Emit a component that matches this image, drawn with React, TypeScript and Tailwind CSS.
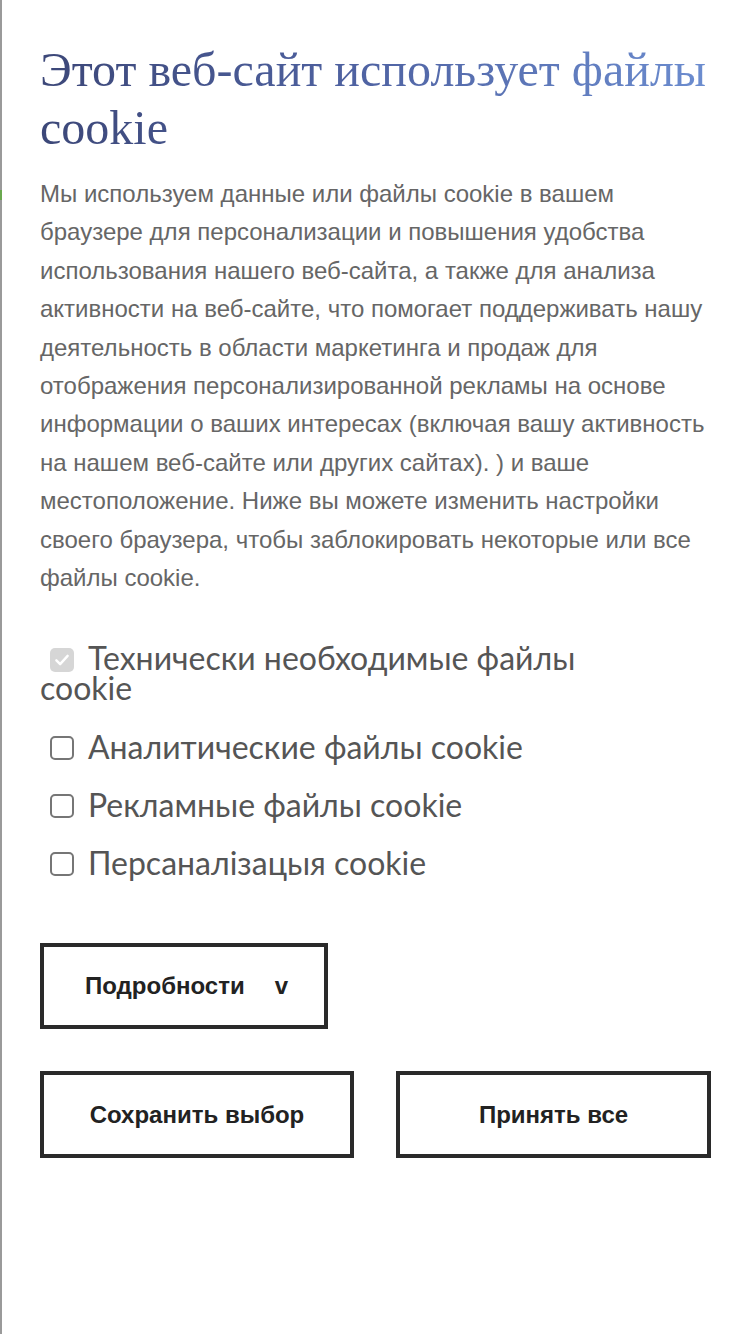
import React, { useState } from 'react';

const Check = () => (
  <svg viewBox="0 0 24 24" className="h-[18px] w-[18px]" fill="none" stroke="white" strokeWidth="3.2" strokeLinecap="round" strokeLinejoin="round">
    <path d="M4.5 12.5l5 5L19.5 6.5" />
  </svg>
);

const Box: React.FC<{ checked: boolean; onClick?: () => void }> = ({ checked, onClick }) => (
  <span
    onClick={onClick}
    className={`mt-[2px] mr-[14px] inline-flex h-[24px] w-[24px] shrink-0 items-center justify-center rounded-[5px] border-2 ${
      checked ? 'bg-[#555] border-[#555]' : 'border-[#767676] bg-white'
    }`}
  >
    {checked && <Check />}
  </span>
);

export default function App() {
  const [analytics, setAnalytics] = useState(false);
  const [ads, setAds] = useState(false);
  const [perso, setPerso] = useState(false);

  const rows = [
    { label: 'Аналитические файлы cookie', value: analytics, set: setAnalytics },
    { label: 'Рекламные файлы cookie', value: ads, set: setAds },
    { label: 'Персаналізацыя cookie', value: perso, set: setPerso },
  ];

  return (
    <div className="relative min-h-[1334px] w-[750px] bg-white border-l-2 border-[#9a9a9a]">
      {/* small green tick on the edge */}
      <div className="absolute left-[-2px] top-[190px] h-[10px] w-[2px] bg-[#6aa84f]" />

      <div className="px-[38px] pt-[41px]">
        <h1 className="font-['Liberation_Serif',serif] text-[48px] leading-[58px] font-normal bg-gradient-to-r from-[#3c4778] via-[#5064a4] to-[#6c8dd0] bg-clip-text text-transparent">
          Этот веб-сайт использует файлы cookie
        </h1>

        <p className="mt-[18px] font-['Liberation_Sans',Arial,sans-serif] text-[24px] leading-[38.4px] text-[#666]">
          Мы используем данные или файлы cookie в вашем браузере для персонализации и повышения удобства использования нашего веб-сайта, а также для анализа активности на веб-сайте, что помогает поддерживать нашу деятельность в области маркетинга и продаж для отображения персонализированной рекламы на основе информации о ваших интересах (включая вашу активность на нашем веб-сайте или других сайтах). ) и ваше местоположение. Ниже вы можете изменить настройки своего браузера, чтобы заблокировать некоторые или все файлы cookie.
        </p>

        <div className="mt-[46px] font-['Lato',sans-serif] text-[32px] leading-[30px] text-[#555]">
          <div className="pl-[10px]">
            <span className="inline-flex align-[1px] mr-[14px] h-[24px] w-[24px] items-center justify-center rounded-[5px] bg-[#d6d6d6]">
              <Check />
            </span>
            Технически необходимые файлы
            <br />
            <span className="-ml-[10px]">cookie</span>
          </div>

          <div className="mt-[29px] flex flex-col gap-[28px]">
            {rows.map((r) => (
              <label key={r.label} className="flex h-[30px] items-center pl-[10px] cursor-pointer">
                <Box checked={r.value} onClick={() => r.set(!r.value)} />
                <span>{r.label}</span>
              </label>
            ))}
          </div>
        </div>

        <div className="mt-[65px] font-['Liberation_Sans',Arial,sans-serif] text-[24px] font-bold text-[#222]">
          <button className="flex h-[86px] w-[288px] items-center border-[4px] border-[#2a2a2a] pl-[41px]">
            <span>Подробности</span>
            <span className="ml-[30px]">v</span>
          </button>

          <div className="mt-[42px] flex gap-[42px]">
            <button className="flex h-[87px] w-[314px] items-center justify-center border-[4px] border-[#2a2a2a]">
              Сохранить выбор
            </button>
            <button className="flex h-[87px] w-[315px] items-center justify-center border-[4px] border-[#2a2a2a]">
              Принять все
            </button>
          </div>
        </div>
      </div>
    </div>
  );
}
